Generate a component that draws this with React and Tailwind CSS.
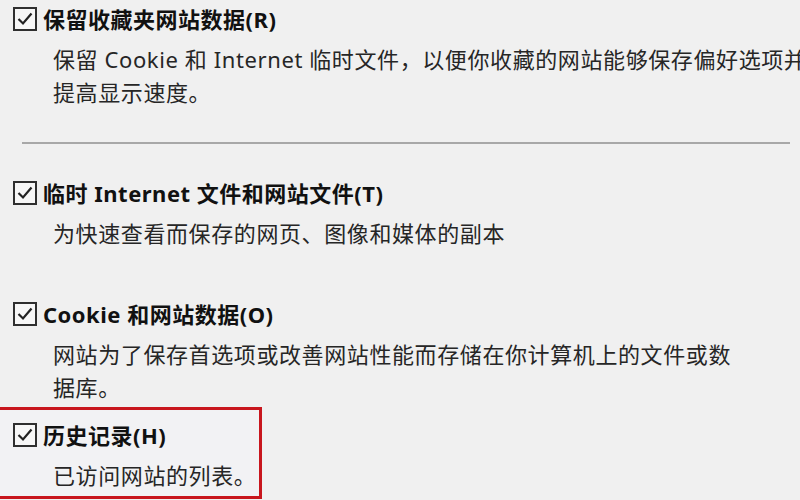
import React from 'react';

const font = { fontFamily: '"Noto Sans", "Noto Sans CJK SC", sans-serif' };

function CheckBox() {
    return (
        <span className="flex h-[24px] w-[24px] shrink-0 items-center justify-center border-2 border-[#2f2f2f] bg-[#f7f7f7]">
            <svg width="18" height="18" viewBox="0 0 18 18" fill="none">
                <polyline points="2.5,9 7,13.5 15.5,3.5" stroke="#222" strokeWidth="2.2" strokeLinejoin="miter" />
            </svg>
        </span>
    );
}

function Option({ title, lines, className = '' }) {
    return (
        <div className={className}>
            <div className="flex h-[34px] items-center gap-[6px] pl-[13px]">
                <CheckBox />
                <span className="text-[22px] font-bold tracking-[0.5px] text-[#111]">{title}</span>
            </div>
            <div className="mt-[7px] pl-[53px] text-[22px] leading-[33px] tracking-[0.6px] text-[#262626]">
                {lines.map((line) => (
                    <div key={line} className="whitespace-nowrap">{line}</div>
                ))}
            </div>
        </div>
    );
}

export default function App() {
    return (
        <div className="h-[500px] w-[800px] overflow-hidden bg-[#f0f0f0] pt-[2px]" style={font}>
            <Option
                className="h-[140px]"
                title="保留收藏夹网站数据(R)"
                lines={['保留 Cookie 和 Internet 临时文件，以便你收藏的网站能够保存偏好选项并', '提高显示速度。']}
            />
            <div className="ml-[22px] mr-[10px] h-[2px] bg-[#a8a8a8]" />

            <div className="pt-[32px]">
                <Option
                    className="h-[121px]"
                    title="临时 Internet 文件和网站文件(T)"
                    lines={['为快速查看而保存的网页、图像和媒体的副本']}
                />
                <Option
                    className="h-[110px]"
                    title="Cookie 和网站数据(O)"
                    lines={['网站为了保存首选项或改善网站性能而存储在你计算机上的文件或数', '据库。']}
                />
            </div>

            <div className="w-[262px] border-y-[3px] border-r-[3px] border-[#c8161d] bg-[#f2f2f4] pt-[8px] pb-[4px]">
                <Option title="历史记录(H)" lines={['已访问网站的列表。']} />
            </div>
        </div>
    );
}
